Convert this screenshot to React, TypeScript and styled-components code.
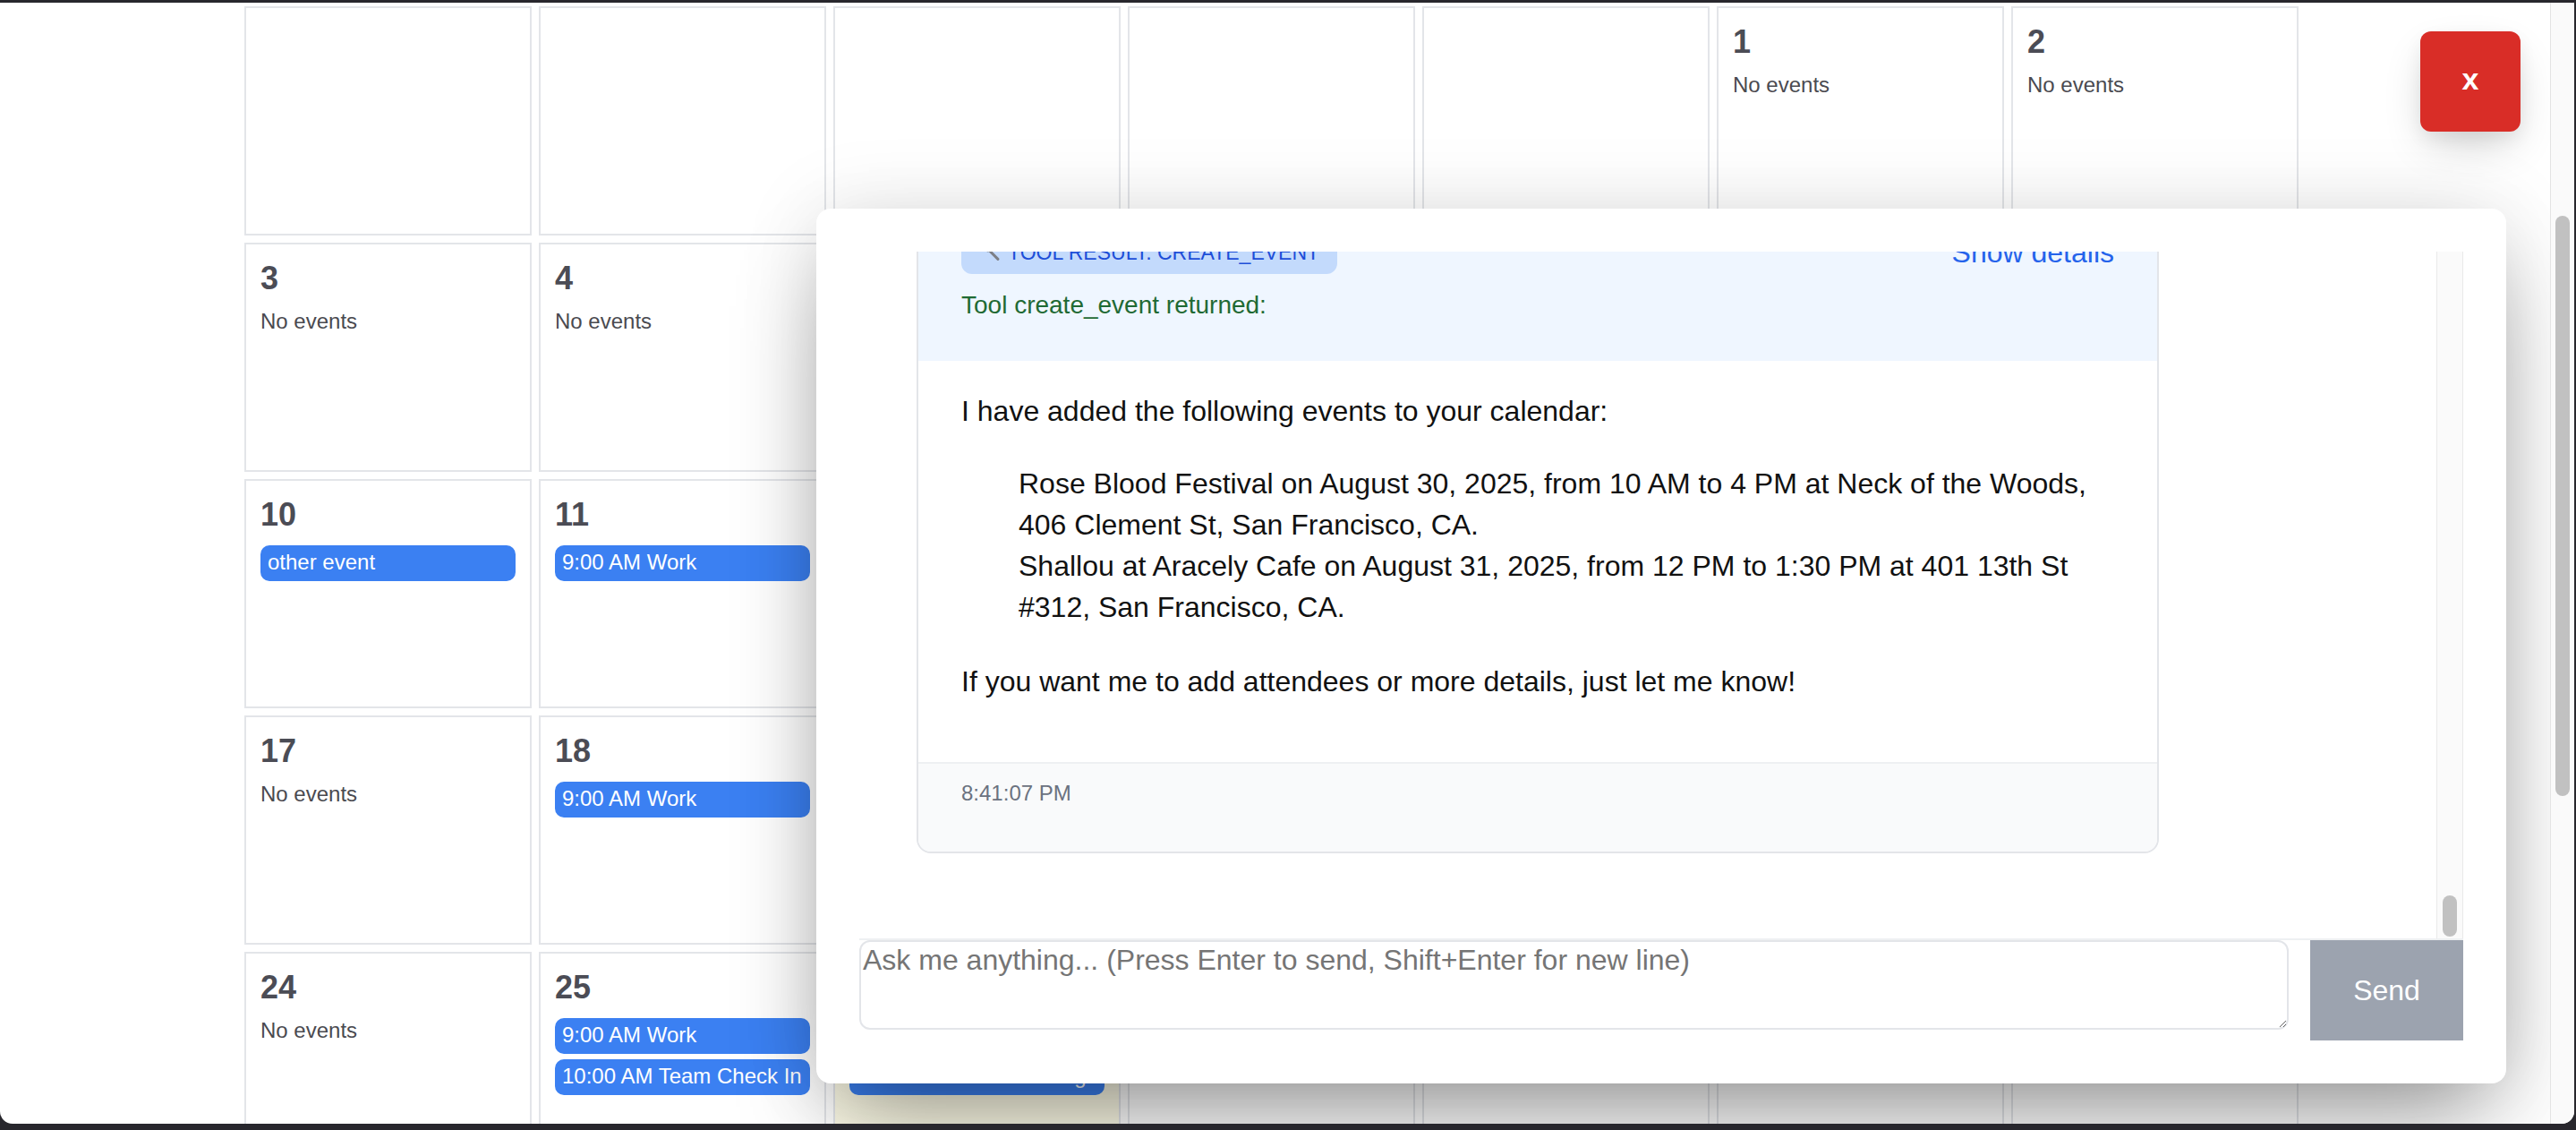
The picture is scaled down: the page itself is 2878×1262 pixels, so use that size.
import React from 'react';
import styled, { createGlobalStyle } from 'styled-components';

const GlobalStyle = createGlobalStyle`
  html, body {
    margin: 0;
    padding: 0;
    background: #28272d;
  }
  body {
    font-family: "Liberation Sans", Arial, Helvetica, sans-serif;
    overflow: hidden;
  }
  *, *::before, *::after {
    box-sizing: border-box;
  }
`;

interface CalEvent {
  label: string;
}

interface Message {
  id: number;
  role: 'user' | 'assistant';
  text?: string;
  time: string;
}

const LEADING_BLANKS = 5;
const DAYS_IN_MONTH = 31;
const TODAY = 26;

const EVENTS: Record<number, CalEvent[]> = {
  10: [{ label: 'other event' }],
  11: [{ label: '9:00 AM Work' }],
  18: [{ label: '9:00 AM Work' }],
  25: [{ label: '9:00 AM Work' }, { label: '10:00 AM Team Check In' }],
  26: [{ label: '9:00 AM Standup' }, { label: '11:00 AM Team Meeting' }],
  30: [{ label: '10:00 AM Rose Blood Festival' }],
  31: [{ label: '12:00 PM Shallou at Aracely Cafe' }],
};

const Screen = styled.div`
  width: 2878px;
  height: 1262px;
  background: #28272d;
  padding: 3px 2px 7px 0;
`;

const Window = styled.div`
  height: 100%;
  display: flex;
  background: #fff;
  border-radius: 0 0 14px 14px;
  overflow: hidden;
`;

const Page = styled.main`
  position: relative;
  flex: 1;
  overflow: hidden;
  padding: 4px 0 0 273px;
`;

const PageScroll = styled.div`
  width: 27px;
  flex-shrink: 0;
  background: #fafafa;
  border-left: 1px solid #e4e4e4;
  display: flex;
  justify-content: center;
  padding-top: 238px;
`;

const PageThumb = styled.div`
  width: 16px;
  height: 648px;
  border-radius: 8px;
  background: #c1c1c1;
`;

const Grid = styled.div`
  display: grid;
  grid-template-columns: repeat(7, 321px);
  grid-auto-rows: 256px;
  gap: 8px;
`;

const Cell = styled.div<{ $today?: boolean }>`
  border: 2px solid #e3e5e9;
  background: ${p => (p.$today ? '#fefce8' : '#fff')};
  padding: 18px 16px 16px;
  display: flex;
  flex-direction: column;
  overflow: hidden;
`;

const DayNumber = styled.div`
  font-size: 36px;
  line-height: 40px;
  font-weight: 700;
  color: #4b4c55;
  margin-bottom: 14px;
`;

const NoEvents = styled.div`
  font-size: 24px;
  line-height: 28px;
  color: #4a4a50;
`;

const EventChip = styled.div`
  height: 40px;
  line-height: 38px;
  padding: 0 8px;
  border-radius: 10px;
  background: #3b80f2;
  color: #fff;
  font-size: 24px;
  white-space: nowrap;
  overflow: hidden;

  & + & {
    margin-top: 6px;
  }
`;

const CloseButton = styled.button`
  position: absolute;
  left: 2704px;
  top: 32px;
  width: 112px;
  height: 112px;
  border: none;
  border-radius: 12px;
  background: #d92d27;
  color: #fff;
  font-family: inherit;
  font-size: 34px;
  font-weight: 700;
  line-height: 1;
  padding: 0 0 6px;
  box-shadow: 0 20px 50px -10px rgba(0, 0, 0, 0.2), 0 8px 20px rgba(0, 0, 0, 0.06);
  cursor: pointer;
`;

const ChatPanel = styled.section`
  position: absolute;
  left: 912px;
  top: 230px;
  width: 1888px;
  padding: 48px;
  background: #fff;
  border-radius: 16px;
  box-shadow: 0 50px 100px -24px rgba(0, 0, 0, 0.42), 0 0 90px rgba(0, 0, 0, 0.1);
  display: flex;
  flex-direction: column;
`;

const MessagesRow = styled.div`
  display: flex;
  height: 769px;
  border-bottom: 2px solid #eef0f2;
`;

const Viewport = styled.div`
  flex: 1;
  overflow: hidden;
  display: flex;
  flex-direction: column;
  justify-content: flex-end;
  gap: 32px;
  padding: 0 0 95px 64px;
`;

const ScrollTrack = styled.div`
  width: 30px;
  flex-shrink: 0;
  background: #fafafa;
  border-left: 1px solid #e9e9e9;
  border-right: 1px solid #e9e9e9;
  display: flex;
  flex-direction: column;
  justify-content: flex-end;
  align-items: center;
  padding-bottom: 2px;
`;

const ScrollThumb = styled.div`
  width: 16px;
  height: 46px;
  border-radius: 8px;
  background: #c1c1c1;
`;

const UserBubble = styled.div`
  align-self: flex-end;
  flex-shrink: 0;
  max-width: 1100px;
  margin-right: 64px;
  padding: 24px 32px;
  border-radius: 16px;
  background: #3b82f6;
  color: #fff;
  font-size: 32px;
  line-height: 46px;
`;

const Card = styled.article`
  flex-shrink: 0;
  width: 1388px;
  border: 2px solid #e3e5e9;
  border-radius: 16px;
  overflow: hidden;
  background: #fff;
`;

const ToolHeader = styled.div`
  background: #eff6ff;
  padding: 24px 48px 46px;
`;

const ToolTopRow = styled.div`
  display: flex;
  align-items: center;
  justify-content: space-between;
`;

const ToolBadge = styled.span`
  display: inline-flex;
  align-items: center;
  gap: 6px;
  height: 48px;
  padding: 0 20px 0 24px;
  border-radius: 12px;
  background: #c3dafc;
  color: #1d4ed8;
  font-size: 23px;
  text-transform: uppercase;
`;

const DetailsLink = styled.button`
  border: none;
  background: none;
  padding: 0;
  color: #2563eb;
  font-family: inherit;
  font-size: 32px;
  cursor: pointer;
`;

const ToolReturned = styled.div`
  margin-top: 19px;
  font-size: 28px;
  line-height: 32px;
  color: #1f6a34;
`;

const Body = styled.div`
  padding: 0 24px 67px 48px;
  color: #111;
  font-size: 32px;
  line-height: 46px;

  p {
    margin: 33px 0 0;
  }
  p + p,
  ul + p {
    margin-top: 37px;
  }
`;

const EventList = styled.ul`
  list-style: none;
  margin: 35px 0 0;
  padding: 0 0 0 64px;
`;

const CardFooter = styled.div`
  border-top: 2px solid #eef0f2;
  background: #f9fafb;
  padding: 19px 48px 51px;
  font-size: 24px;
  line-height: 28px;
  color: #6b7280;
`;

const InputRow = styled.div`
  display: flex;
  align-items: flex-start;
  gap: 24px;
`;

const Input = styled.textarea`
  flex: 1;
  height: 100px;
  border: 2px solid #e3e5e9;
  border-radius: 12px;
  padding: 2px;
  font-family: inherit;
  font-size: 32px;
  color: #111;
  outline: none;

  &::placeholder {
    color: #757575;
  }
`;

const SendButton = styled.button`
  width: 171px;
  height: 112px;
  border: none;
  background: #9ca3af;
  color: #fff;
  font-family: inherit;
  font-size: 32px;
`;

const WrenchIcon = () => (
  <svg width="22" height="22" viewBox="0 0 24 24" aria-hidden="true">
    <path
      d="M4 3.5a4.5 4.5 0 0 1 5.6 5.4l10 10a1.6 1.6 0 0 1-2.3 2.3l-10-10A4.5 4.5 0 0 1 2 5.6l2.7 2.7 2.2-.6.6-2.2L4.8 2.8c-.3-.1-.5-.1-.8.7z"
      fill="#7d7f86"
    />
  </svg>
);

const DayCell: React.FC<{ day: number | null }> = ({ day }) => {
  if (day === null) return <Cell />;
  const events = EVENTS[day] || [];
  return (
    <Cell $today={day === TODAY}>
      <DayNumber>{day}</DayNumber>
      {events.length === 0 ? (
        <NoEvents>No events</NoEvents>
      ) : (
        events.map((ev, i) => <EventChip key={i}>{ev.label}</EventChip>)
      )}
    </Cell>
  );
};

const messages: Message[] = [
  {
    id: 1,
    role: 'user',
    text: 'Add Rose Blood Festival on Aug 30 and Shallou at Aracely Cafe on Aug 31 to my calendar',
    time: '8:40:52 PM',
  },
  { id: 2, role: 'assistant', time: '8:41:07 PM' },
];

const AssistantCard: React.FC<{ time: string }> = ({ time }) => {
  const [open, setOpen] = React.useState(false);
  return (
    <Card>
      <ToolHeader>
        <ToolTopRow>
          <ToolBadge>
            <WrenchIcon />
            Tool Result: create_event
          </ToolBadge>
          <DetailsLink onClick={() => setOpen(!open)}>
            {open ? 'Hide details' : 'Show details'}
          </DetailsLink>
        </ToolTopRow>
        <ToolReturned>Tool create_event returned:</ToolReturned>
      </ToolHeader>
      <Body>
        <p>I have added the following events to your calendar:</p>
        <EventList>
          <li>
            Rose Blood Festival on August 30, 2025, from 10 AM to 4 PM at Neck of
            the Woods, 406 Clement St, San Francisco, CA.
          </li>
          <li>
            Shallou at Aracely Cafe on August 31, 2025, from 12 PM to 1:30 PM at
            401 13th St #312, San Francisco, CA.
          </li>
        </EventList>
        <p>If you want me to add attendees or more details, just let me know!</p>
      </Body>
      <CardFooter>{time}</CardFooter>
    </Card>
  );
};

export default function App() {
  const [draft, setDraft] = React.useState('');

  const cells: (number | null)[] = [
    ...Array.from({ length: LEADING_BLANKS }, () => null),
    ...Array.from({ length: DAYS_IN_MONTH }, (_, i) => i + 1),
  ];

  return (
    <>
      <GlobalStyle />
      <Screen>
        <Window>
          <Page>
            <Grid>
              {cells.map((day, i) => (
                <DayCell key={i} day={day} />
              ))}
            </Grid>

            <CloseButton>x</CloseButton>

            <ChatPanel>
              <MessagesRow>
                <Viewport>
                  {messages.map(m =>
                    m.role === 'user' ? (
                      <UserBubble key={m.id}>{m.text}</UserBubble>
                    ) : (
                      <AssistantCard key={m.id} time={m.time} />
                    )
                  )}
                </Viewport>
                <ScrollTrack>
                  <ScrollThumb />
                </ScrollTrack>
              </MessagesRow>
              <InputRow>
                <Input
                  value={draft}
                  onChange={e => setDraft(e.target.value)}
                  placeholder="Ask me anything... (Press Enter to send, Shift+Enter for new line)"
                />
                <SendButton disabled={!draft.trim()}>Send</SendButton>
              </InputRow>
            </ChatPanel>
          </Page>
          <PageScroll>
            <PageThumb />
          </PageScroll>
        </Window>
      </Screen>
    </>
  );
}
